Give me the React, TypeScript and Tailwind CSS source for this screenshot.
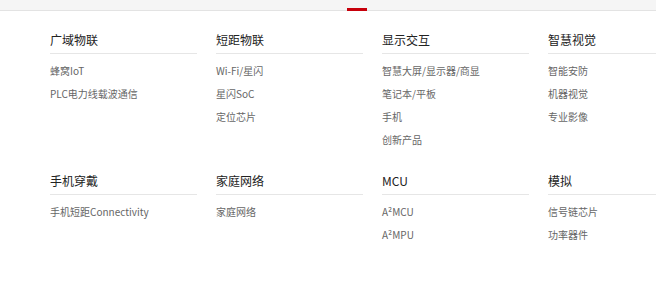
import React from "react";

const groups: { title: string; items: string[] }[] = [
  { title: "广域物联", items: ["蜂窝IoT", "PLC电力线载波通信"] },
  { title: "短距物联", items: ["Wi-Fi/星闪", "星闪SoC", "定位芯片"] },
  { title: "显示交互", items: ["智慧大屏/显示器/商显", "笔记本/平板", "手机", "创新产品"] },
  { title: "智慧视觉", items: ["智能安防", "机器视觉", "专业影像"] },
  { title: "手机穿戴", items: ["手机短距Connectivity"] },
  { title: "家庭网络", items: ["家庭网络"] },
  { title: "MCU", items: ["A²MCU", "A²MPU"] },
  { title: "模拟", items: ["信号链芯片", "功率器件"] },
];

export default function App() {
  return (
    <div
      className="w-[656px] h-[290px] bg-white overflow-hidden"
      style={{ fontFamily: '"Noto Sans CJK SC", "Noto Sans", sans-serif' }}
    >
      <div className="relative h-[11px] bg-[#f5f5f5] border-b border-[#e3e3e3]">
        <div className="absolute left-[347px] top-[8px] w-[20px] h-[3px] bg-[#c7000b]" />
      </div>
      <div className="grid grid-cols-[repeat(4,147px)] gap-x-[19px] gap-y-[20px] pl-[50px] pt-[19px]">
        {groups.map((g) => (
          <div key={g.title} className="flex flex-col">
            <div className="text-[12px] leading-[20px] text-[#222] pb-[3px] border-b border-[#e6e6e6]">
              {g.title}
            </div>
            <div className="flex flex-col pt-[5px]">
              {g.items.map((it) => (
                <div key={it} className="text-[10px] leading-[23px] text-[#666]">
                  {it}
                </div>
              ))}
            </div>
          </div>
        ))}
      </div>
    </div>
  );
}
